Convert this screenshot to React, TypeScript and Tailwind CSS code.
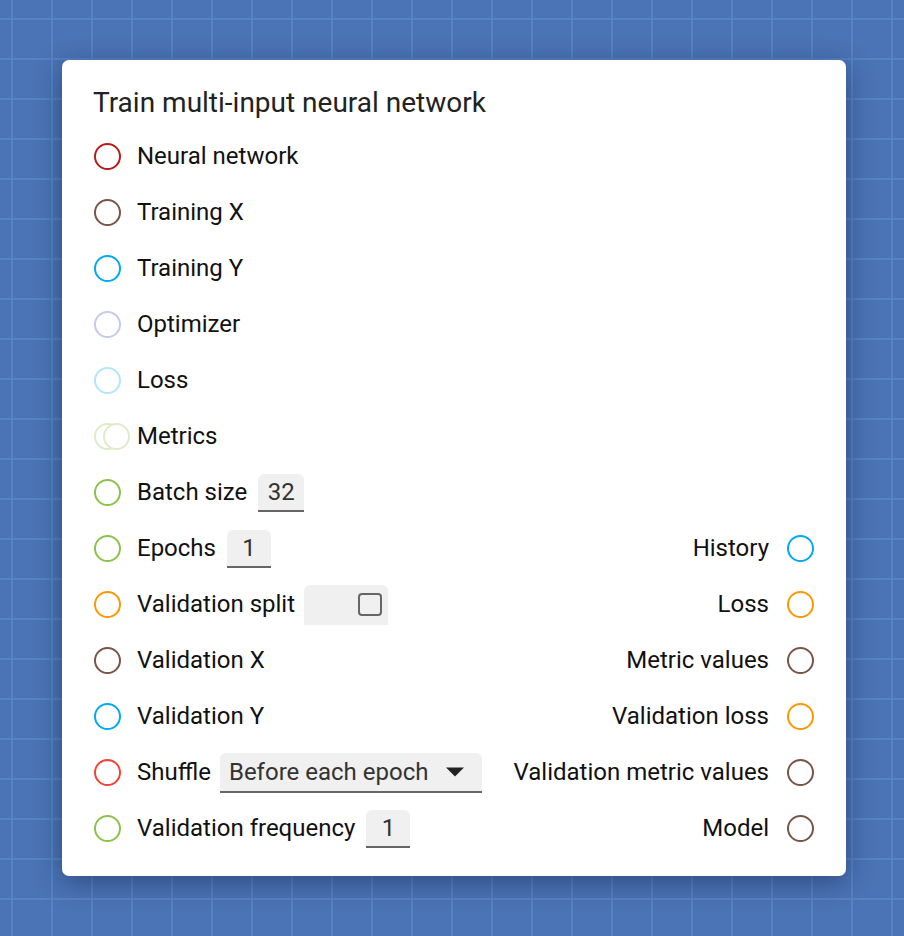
import React from 'react';

type Port = { label: string; color: string; double?: boolean; control?: React.ReactNode };

const NumberBox = ({ value, width }: { value: string; width: string }) => (
  <div className={`ml-[11px] mt-[1px] ${width} h-[38px] bg-[#f0f0f0] rounded-t-[6px] border-b-2 border-[#666] flex items-center justify-center text-[24px] text-[#333]`}>
    {value}
  </div>
);

const INPUTS: Port[] = [
  { label: 'Neural network', color: '#b71c1c' },
  { label: 'Training X', color: '#795548' },
  { label: 'Training Y', color: '#03a9f4' },
  { label: 'Optimizer', color: '#c5cae9' },
  { label: 'Loss', color: '#b3e5fc' },
  { label: 'Metrics', color: '#dcedc8', double: true },
  { label: 'Batch size', color: '#8bc34a', control: <NumberBox value="32" width="w-[46px]" /> },
  { label: 'Epochs', color: '#8bc34a', control: <NumberBox value="1" width="w-[44px]" /> },
  {
    label: 'Validation split',
    color: '#ff9800',
    control: (
      <div className="ml-[9px] mt-[1px] w-[84px] h-[40px] bg-[#f0f0f0] rounded-t-[6px] flex items-center justify-end pr-[6px]">
        <div className="w-[24px] h-[23px] border-2 border-[#666] rounded-[4px]" />
      </div>
    ),
  },
  { label: 'Validation X', color: '#795548' },
  { label: 'Validation Y', color: '#03a9f4' },
  {
    label: 'Shuffle',
    color: '#f44336',
    control: (
      <div className="ml-[9px] mt-[1px] w-[262px] h-[40px] bg-[#f0f0f0] rounded-t-[6px] border-b-2 border-[#666] flex items-center justify-between pl-[9px] pr-[16px] text-[24px] text-[#333]">
        <span>Before each epoch</span>
        <svg width="22" height="11" viewBox="0 0 22 11">
          <path d="M2 1.5h18l-9 9z" fill="#222" />
        </svg>
      </div>
    ),
  },
  { label: 'Validation frequency', color: '#8bc34a', control: <NumberBox value="1" width="w-[44px]" /> },
];

const OUTPUTS: Port[] = [
  { label: 'History', color: '#03a9f4' },
  { label: 'Loss', color: '#ff9800' },
  { label: 'Metric values', color: '#795548' },
  { label: 'Validation loss', color: '#ff9800' },
  { label: 'Validation metric values', color: '#795548' },
  { label: 'Model', color: '#795548' },
];

const Dot = ({ color, double }: { color: string; double?: boolean }) =>
  double ? (
    <div className="relative w-[27px] h-[27px] shrink-0">
      <div className="absolute left-0 top-0 w-[27px] h-[27px] rounded-full border-2" style={{ borderColor: color }} />
      <div className="absolute left-[9px] top-0 w-[27px] h-[27px] rounded-full border-2 bg-white" style={{ borderColor: color }} />
    </div>
  ) : (
    <div className="w-[27px] h-[27px] rounded-full border-2 shrink-0" style={{ borderColor: color }} />
  );

export default function App() {
  return (
    <div
      className="w-full h-[936px] overflow-hidden bg-[#4b74b6] bg-[image:linear-gradient(to_right,#5683c4_2px,transparent_2px),linear-gradient(to_bottom,#5683c4_2px,transparent_2px)] bg-[size:40px_40px] bg-[position:11px_18px] pt-[60px] pl-[62px]"
      style={{ fontFamily: 'Roboto, "Noto Sans", sans-serif' }}
    >
      <div className="w-[784px] bg-white rounded-[7px] shadow-[0_6px_28px_rgba(10,25,60,0.45)] pt-[27px] pb-[20px] px-8">
        <h1 className="h-8 leading-8 text-[28px] font-normal text-[#222] -ml-px">Train multi-input neural network</h1>

        <div className="mt-[9px] flex justify-between">
          <div className="flex flex-col">
            {INPUTS.map((p) => (
              <div key={p.label} className="h-14 flex items-center">
                <Dot color={p.color} double={p.double} />
                <span className="ml-4 text-[24px] text-[#111]">{p.label}</span>
                {p.control}
              </div>
            ))}
          </div>

          <div className="flex flex-col justify-end">
            {OUTPUTS.map((p) => (
              <div key={p.label} className="h-14 flex items-center justify-end">
                <span className="mr-[18px] text-[24px] text-[#111]">{p.label}</span>
                <Dot color={p.color} />
              </div>
            ))}
          </div>
        </div>
      </div>
    </div>
  );
}
